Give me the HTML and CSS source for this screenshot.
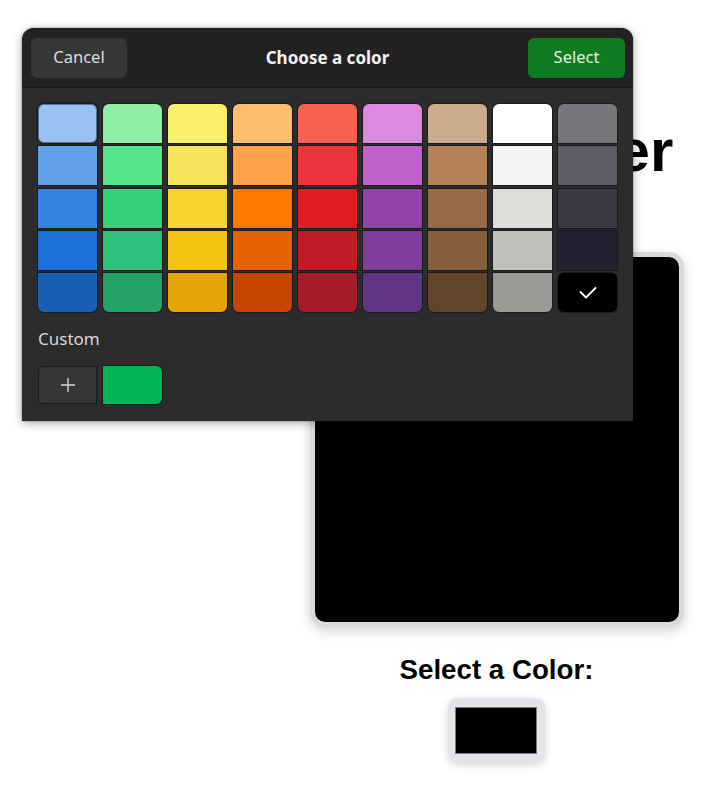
FILE: index.html
```html
<!DOCTYPE html>
<html lang="en">
<head>
<meta charset="utf-8">
<title>Color Picker</title>
<link rel="stylesheet" href="styles.css">
</head>
<body>
<main class="page">
  <h1 class="page__title">Color Picker</h1>
  <div class="preview"></div>
  <label class="page__label">Select a Color:</label>
  <div class="color-input"><span class="color-input__well"></span></div>
</main>

<div class="dialog">
  <header class="dialog__header">
    <button class="btn btn--cancel">Cancel</button>
    <span class="dialog__title">Choose a color</span>
    <button class="btn btn--select">Select</button>
  </header>
  <div class="dialog__body">
    <div class="palette">
      <div class="palette__col">
        <span class="swatch swatch--focus" style="background:#99c1f1"></span>
        <span class="swatch" style="background:#62a0ea"></span>
        <span class="swatch" style="background:#3584e4"></span>
        <span class="swatch" style="background:#1c71d8"></span>
        <span class="swatch" style="background:#1a5fb4"></span>
      </div>
      <div class="palette__col">
        <span class="swatch" style="background:#8ff0a4"></span>
        <span class="swatch" style="background:#57e389"></span>
        <span class="swatch" style="background:#33d17a"></span>
        <span class="swatch" style="background:#2ec27e"></span>
        <span class="swatch" style="background:#26a269"></span>
      </div>
      <div class="palette__col">
        <span class="swatch" style="background:#f9f06b"></span>
        <span class="swatch" style="background:#f8e45c"></span>
        <span class="swatch" style="background:#f6d32d"></span>
        <span class="swatch" style="background:#f5c211"></span>
        <span class="swatch" style="background:#e5a50a"></span>
      </div>
      <div class="palette__col">
        <span class="swatch" style="background:#ffbe6f"></span>
        <span class="swatch" style="background:#ffa348"></span>
        <span class="swatch" style="background:#ff7800"></span>
        <span class="swatch" style="background:#e66100"></span>
        <span class="swatch" style="background:#c64600"></span>
      </div>
      <div class="palette__col">
        <span class="swatch" style="background:#f66151"></span>
        <span class="swatch" style="background:#ed333b"></span>
        <span class="swatch" style="background:#e01b24"></span>
        <span class="swatch" style="background:#c01c28"></span>
        <span class="swatch" style="background:#a51d2d"></span>
      </div>
      <div class="palette__col">
        <span class="swatch" style="background:#dc8add"></span>
        <span class="swatch" style="background:#c061cb"></span>
        <span class="swatch" style="background:#9141ac"></span>
        <span class="swatch" style="background:#813d9c"></span>
        <span class="swatch" style="background:#613583"></span>
      </div>
      <div class="palette__col">
        <span class="swatch" style="background:#cdab8f"></span>
        <span class="swatch" style="background:#b5835a"></span>
        <span class="swatch" style="background:#986a44"></span>
        <span class="swatch" style="background:#865e3c"></span>
        <span class="swatch" style="background:#63452c"></span>
      </div>
      <div class="palette__col">
        <span class="swatch" style="background:#ffffff"></span>
        <span class="swatch" style="background:#f6f5f4"></span>
        <span class="swatch" style="background:#deddda"></span>
        <span class="swatch" style="background:#c0bfbc"></span>
        <span class="swatch" style="background:#9a9996"></span>
      </div>
      <div class="palette__col">
        <span class="swatch" style="background:#77767b"></span>
        <span class="swatch" style="background:#5e5c64"></span>
        <span class="swatch" style="background:#3d3846"></span>
        <span class="swatch" style="background:#241f31"></span>
        <span class="swatch swatch--selected" style="background:#000000">
          <svg class="swatch__check" width="18" height="12" viewBox="0 0 18 12"><path d="M1.5 5 L7 10.5 L16.5 1" fill="none" stroke="#ffffff" stroke-width="1.8" stroke-linecap="round" stroke-linejoin="round"/></svg>
        </span>
      </div>
    </div>
    <div class="custom-label">Custom</div>
    <div class="custom-row">
      <button class="add-btn">
        <svg width="16" height="16" viewBox="0 0 16 16"><path d="M8 1 V15 M1 8 H15" stroke="#dedede" stroke-width="1.3" fill="none"/></svg>
      </button>
      <span class="custom-swatch"></span>
    </div>
  </div>
</div>
</body>
</html>
```

FILE: styles.css
```css
html, body {
  margin: 0;
  padding: 0;
  background: #ffffff;
}

body {
  width: 723px;
  height: 802px;
  overflow: hidden;
  position: relative;
  font-family: "Liberation Sans", Arial, sans-serif;
}

.page {
  display: flex;
  flex-direction: column;
  align-items: center;
  padding-left: 270px;
}

.page__title {
  margin: 116px 0 66px;
  font-size: 60px;
  line-height: 70px;
  font-weight: 700;
  color: #000;
  white-space: nowrap;
}

.preview {
  width: 364px;
  height: 365px;
  background: #000;
  border: 5px solid #dadada;
  border-radius: 15px;
  box-shadow: 0 4px 12px rgba(0, 0, 0, 0.18);
}

.page__label {
  display: block;
  margin-top: 27px;
  font-size: 27.7px;
  line-height: 32px;
  font-weight: 700;
  color: #000;
}

.color-input {
  margin-top: 12px;
  padding: 9px 8px 8px 7px;
  background: #e4e4e8;
  border-radius: 9px;
  box-shadow: 0 3px 8px rgba(0, 0, 0, 0.16);
  display: flex;
}

.color-input__well {
  display: block;
  width: 80px;
  height: 45px;
  background: #000;
  border: 1px solid #7a7a7a;
}

/* GTK dialog overlay */
.dialog {
  position: absolute;
  left: 22px;
  top: 28px;
  width: 611px;
  height: 393px;
  background: #2c2c2c;
  border-radius: 12px 12px 0 0;
  box-shadow: 0 2px 10px rgba(0, 0, 0, 0.35), 0 0 0 1px rgba(0, 0, 0, 0.12);
  overflow: hidden;
  font-family: "Noto Sans", "Open Sans", sans-serif;
  display: flex;
  flex-direction: column;
}

.dialog__header {
  height: 59px;
  padding: 0 8px 0 9px;
  background: #222222;
  border-bottom: 1px solid #181818;
  display: flex;
  align-items: center;
  justify-content: space-between;
  flex: none;
}

.btn {
  height: 40px;
  border: none;
  border-radius: 6px;
  font-family: inherit;
  font-size: 16.5px;
  line-height: 20px;
  padding: 0 0 3px;
  margin-top: 1px;
}

.btn--cancel {
  width: 96px;
  background: #363636;
  color: #dcdcdc;
}

.btn--select {
  width: 97px;
  background: #107a20;
  color: #e2efe2;
}

.dialog__title {
  font-size: 17px;
  font-weight: 700;
  color: #f2f2f2;
}

.dialog__body {
  padding: 16px 16px 0;
}

.palette {
  display: flex;
  gap: 6px;
}

.palette__col {
  display: flex;
  flex-direction: column;
  gap: 3.25px;
}

.swatch {
  display: flex;
  align-items: center;
  justify-content: center;
  width: 59px;
  height: 39px;
  box-shadow: 0 0 0 1px rgba(0, 0, 0, 0.38);
}

.swatch:first-child {
  border-radius: 6px 6px 0 0;
}

.swatch:last-child {
  border-radius: 0 0 6px 6px;
}

.swatch--focus,
.swatch--focus:first-child {
  border-radius: 6px;
  box-shadow: inset 0 0 0 1px rgba(40, 50, 70, 0.55), 0 0 0 1.5px #1b1b1b;
}

.swatch--selected,
.swatch--selected:last-child {
  border-radius: 6px;
}

.custom-label {
  margin-top: 15px;
  font-size: 17px;
  line-height: 23px;
  color: #d8d8d8;
}

.custom-row {
  margin-top: 16px;
  display: flex;
  gap: 6px;
}

.add-btn {
  width: 59px;
  height: 38px;
  box-sizing: border-box;
  background: #363636;
  border: 1px solid #1d1d1d;
  border-radius: 6px 0 0 6px;
  padding: 0;
  display: flex;
  align-items: center;
  justify-content: center;
}

.custom-swatch {
  display: block;
  width: 59px;
  height: 38px;
  background: #01b554;
  border-radius: 0 6px 6px 0;
  box-shadow: 0 0 0 1px rgba(0, 0, 0, 0.35);
}
```
